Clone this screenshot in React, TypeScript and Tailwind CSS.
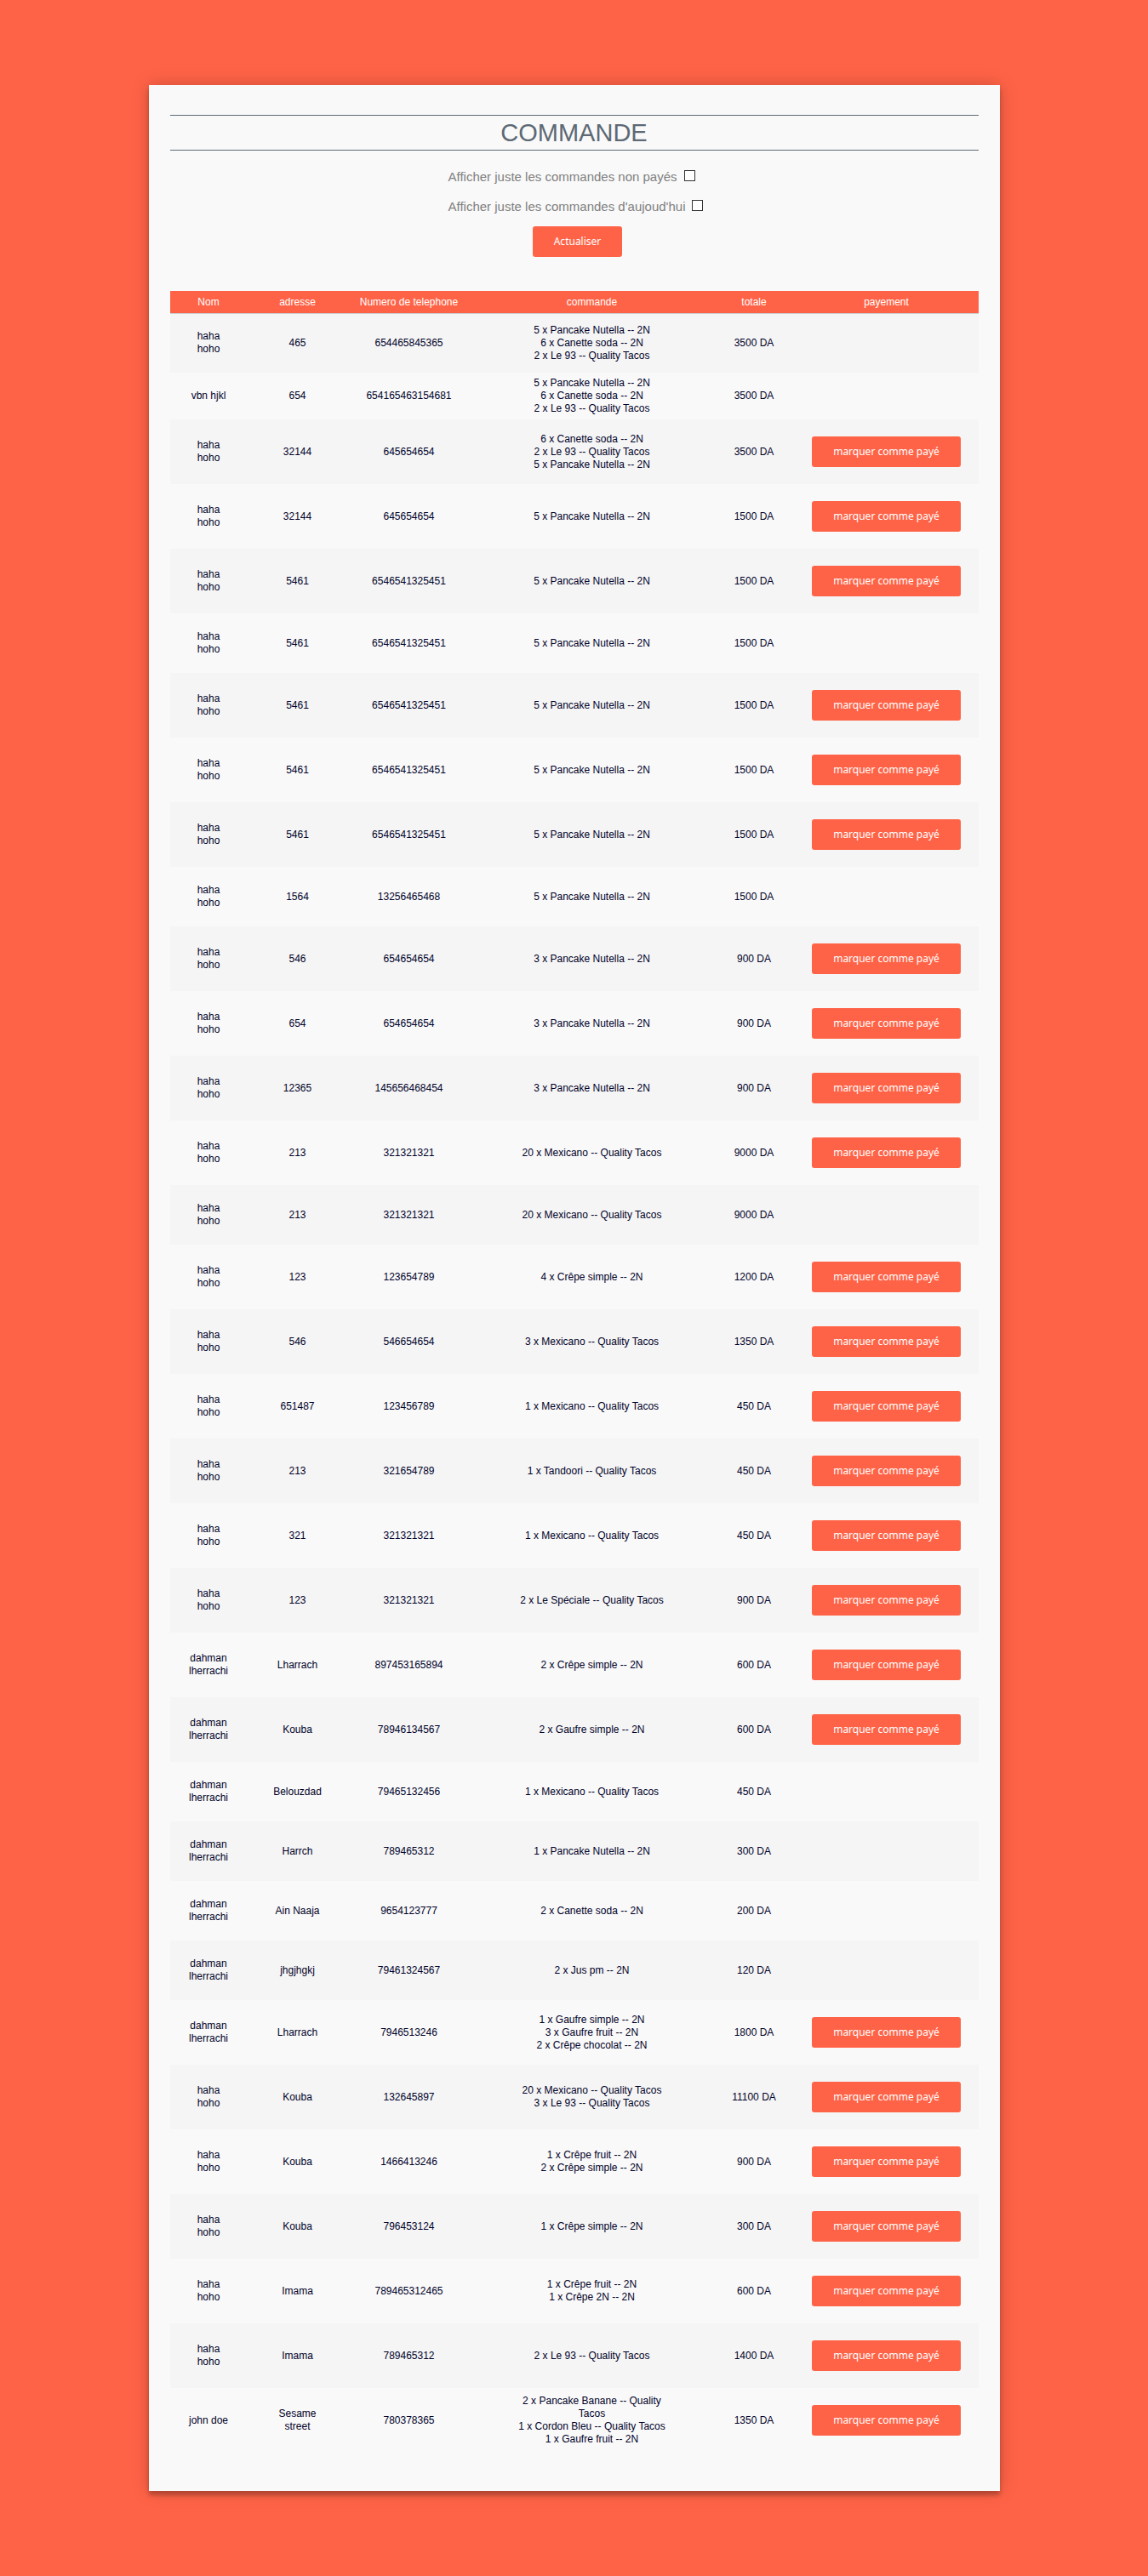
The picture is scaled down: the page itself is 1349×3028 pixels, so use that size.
import React from 'react';

type Order = {
  name: string;
  address: string;
  phone: string;
  items: string[];
  total: string;
  payable: boolean;
};

const o = (name: string, address: string, phone: string, items: string, total: number, payable = true): Order => ({
  name,
  address,
  phone,
  items: items.split('|'),
  total: `${total} DA`,
  payable,
});

const HH = 'haha hoho';
const DL = 'dahman lherrachi';

const orders: Order[] = [
  o(HH, '465', '654465845365', '5 x Pancake Nutella -- 2N|6 x Canette soda -- 2N|2 x Le 93 -- Quality Tacos', 3500, false),
  o('vbn hjkl', '654', '654165463154681', '5 x Pancake Nutella -- 2N|6 x Canette soda -- 2N|2 x Le 93 -- Quality Tacos', 3500, false),
  o(HH, '32144', '645654654', '6 x Canette soda -- 2N|2 x Le 93 -- Quality Tacos|5 x Pancake Nutella -- 2N', 3500),
  o(HH, '32144', '645654654', '5 x Pancake Nutella -- 2N', 1500),
  o(HH, '5461', '6546541325451', '5 x Pancake Nutella -- 2N', 1500),
  o(HH, '5461', '6546541325451', '5 x Pancake Nutella -- 2N', 1500, false),
  o(HH, '5461', '6546541325451', '5 x Pancake Nutella -- 2N', 1500),
  o(HH, '5461', '6546541325451', '5 x Pancake Nutella -- 2N', 1500),
  o(HH, '5461', '6546541325451', '5 x Pancake Nutella -- 2N', 1500),
  o(HH, '1564', '13256465468', '5 x Pancake Nutella -- 2N', 1500, false),
  o(HH, '546', '654654654', '3 x Pancake Nutella -- 2N', 900),
  o(HH, '654', '654654654', '3 x Pancake Nutella -- 2N', 900),
  o(HH, '12365', '145656468454', '3 x Pancake Nutella -- 2N', 900),
  o(HH, '213', '321321321', '20 x Mexicano -- Quality Tacos', 9000),
  o(HH, '213', '321321321', '20 x Mexicano -- Quality Tacos', 9000, false),
  o(HH, '123', '123654789', '4 x Crêpe simple -- 2N', 1200),
  o(HH, '546', '546654654', '3 x Mexicano -- Quality Tacos', 1350),
  o(HH, '651487', '123456789', '1 x Mexicano -- Quality Tacos', 450),
  o(HH, '213', '321654789', '1 x Tandoori -- Quality Tacos', 450),
  o(HH, '321', '321321321', '1 x Mexicano -- Quality Tacos', 450),
  o(HH, '123', '321321321', '2 x Le Spéciale -- Quality Tacos', 900),
  o(DL, 'Lharrach', '897453165894', '2 x Crêpe simple -- 2N', 600),
  o(DL, 'Kouba', '78946134567', '2 x Gaufre simple -- 2N', 600),
  o(DL, 'Belouzdad', '79465132456', '1 x Mexicano -- Quality Tacos', 450, false),
  o(DL, 'Harrch', '789465312', '1 x Pancake Nutella -- 2N', 300, false),
  o(DL, 'Ain Naaja', '9654123777', '2 x Canette soda -- 2N', 200, false),
  o(DL, 'jhgjhgkj', '79461324567', '2 x Jus pm -- 2N', 120, false),
  o(DL, 'Lharrach', '7946513246', '1 x Gaufre simple -- 2N|3 x Gaufre fruit -- 2N|2 x Crêpe chocolat -- 2N', 1800),
  o(HH, 'Kouba', '132645897', '20 x Mexicano -- Quality Tacos|3 x Le 93 -- Quality Tacos', 11100),
  o(HH, 'Kouba', '1466413246', '1 x Crêpe fruit -- 2N|2 x Crêpe simple -- 2N', 900),
  o(HH, 'Kouba', '796453124', '1 x Crêpe simple -- 2N', 300),
  o(HH, 'Imama', '789465312465', '1 x Crêpe fruit -- 2N|1 x Crêpe 2N -- 2N', 600),
  o(HH, 'Imama', '789465312', '2 x Le 93 -- Quality Tacos', 1400),
  o('john doe', 'Sesame street', '780378365', '2 x Pancake Banane -- Quality Tacos|1 x Cordon Bleu -- Quality Tacos|1 x Gaufre fruit -- 2N', 1350),
];

function Button({ children }: { children: React.ReactNode }) {
  return (
    <button
      type="button"
      className="h-9 cursor-pointer rounded-[3px] bg-[#ff6347] px-[25px] align-middle font-['Noto_Sans',sans-serif] text-xs whitespace-nowrap text-white"
    >
      {children}
    </button>
  );
}

function Filter({ id, label }: { id: string; label: string }) {
  return (
    <div className="flex h-[35px] items-center gap-2">
      <label htmlFor={id} className="text-[15px] text-[#808080]">
        {label}
      </label>
      <input id={id} type="checkbox" className="mb-1 size-[13px] appearance-none border border-[#333] bg-white checked:bg-[#333]" />
    </div>
  );
}

function OrderRow({ order }: { order: Order }) {
  const height = order.payable ? 'h-[76px]' : order.name === 'vbn hjkl' ? 'h-[55px]' : 'h-[70px]';
  return (
    <tr className={`${height} odd:bg-[#f5f5f5]`}>
      <td className="px-5">{order.name}</td>
      <td className="px-[30px]">{order.address}</td>
      <td>{order.phone}</td>
      <td className="px-[50px]">
        {order.items.map((item) => (
          <div key={item}>{item}</div>
        ))}
      </td>
      <td>{order.total}</td>
      <td>{order.payable && <Button>marquer comme payé</Button>}</td>
    </tr>
  );
}

export default function App() {
  return (
    <div className="min-h-screen bg-[#ff6347] py-[100px] font-['Liberation_Sans',Arial,sans-serif]">
      <main className="mx-auto max-w-[1000px] bg-[#f9f9f9] px-[25px] pt-[35px] pb-[45px] shadow-[0_0_20px_0_rgba(0,0,0,0.2),0_5px_5px_0_rgba(0,0,0,0.24)]">
        <h1 className="border-y border-[#5d6975] text-center text-[29px] leading-10 text-[#5d6975]">COMMANDE</h1>
        <form className="mt-[14px] flex flex-col items-center">
          <div className="flex flex-col items-start pl-1">
            <Filter id="unpaid" label="Afficher juste les commandes non payés" />
            <Filter id="today" label="Afficher juste les commandes d'aujoud'hui" />
          </div>
          <div className="mt-[5px] pl-2">
            <Button>Actualiser</Button>
          </div>
        </form>
        <table className="mt-10 w-full table-fixed border-collapse text-center text-xs leading-[15px] text-[#000028]">
          <colgroup>
            <col className="w-[91px]" />
            <col className="w-[118px]" />
            <col className="w-[144px]" />
            <col className="w-[286px]" />
            <col className="w-[95px]" />
            <col className="w-[216px]" />
          </colgroup>
          <thead>
            <tr className="h-[26px] border-b border-[#cccccc] bg-[#ff6347] text-white">
              {['Nom', 'adresse', 'Numero de telephone', 'commande', 'totale', 'payement'].map((h) => (
                <th key={h} scope="col" className="pt-0.5 font-normal">
                  {h}
                </th>
              ))}
            </tr>
          </thead>
          <tbody>
            {orders.map((order, i) => (
              <OrderRow key={i} order={order} />
            ))}
          </tbody>
        </table>
      </main>
    </div>
  );
}
